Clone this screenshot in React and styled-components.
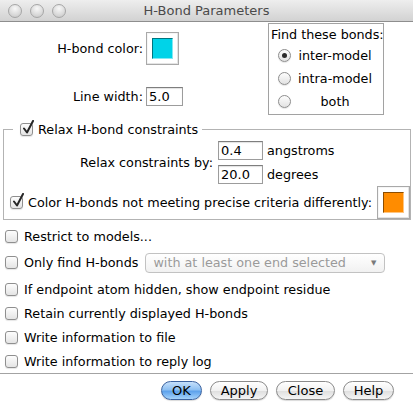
import React from 'react';
import styled, { createGlobalStyle, css } from 'styled-components';

const GlobalStyle = createGlobalStyle`
  html, body {
    margin: 0;
    padding: 0;
    background: #fff;
  }
  body {
    font-family: 'DejaVu Sans', 'Liberation Sans', sans-serif;
    font-size: 12.75px;
    color: #000;
  }
`;

const Window = styled.div`
  width: 413px;
  height: 406px;
  display: flex;
  flex-direction: column;
  background: #fff;
  overflow: hidden;
`;

const TitleBar = styled.div`
  height: 21px;
  flex-shrink: 0;
  display: grid;
  grid-template-columns: 1fr auto 1fr;
  align-items: center;
  background: linear-gradient(#eeeeee, #d2d2d2);
  border-bottom: 1px solid #8e8e8e;
`;

const Lights = styled.div`
  display: flex;
  gap: 8px;
  padding-left: 8px;
`;

const Light = styled.span`
  width: 12px;
  height: 12px;
  border-radius: 50%;
  border: 1px solid #a6a6a6;
  background: radial-gradient(circle at 50% 30%, #f8f8f8 0%, #dcdcdc 55%, #c4c4c4 100%);
`;

const Title = styled.div`
  font-size: 13px;
  color: #4a4a4a;
`;

const Body = styled.div`
  flex: 1;
  display: flex;
  flex-direction: column;
`;

const Top = styled.div`
  display: flex;
  align-items: flex-start;
`;

const LeftGrid = styled.div`
  display: grid;
  grid-template-columns: 143px auto;
  column-gap: 3px;
  row-gap: 22px;
  align-items: center;
  padding-top: 10px;
`;

const Label = styled.span`
  text-align: right;
  white-space: nowrap;
`;

const Well = styled.div`
  width: 33px;
  height: 33px;
  box-sizing: border-box;
  border: 1px solid #a9a9a9;
  background: #fff;
  box-shadow: inset -1px -1px 0 #e4e4e4, inset 1px 1px 0 #f6f6f6;
  display: flex;
  align-items: center;
  justify-content: center;
  justify-self: start;
  margin-left: ${({ $push }) => ($push ? 'auto' : '0')};
`;

const Swatch = styled.div`
  width: 21px;
  height: 21px;
  box-sizing: border-box;
  background: ${({ $color }) => $color};
  border-top: 1px solid rgba(0, 0, 0, 0.45);
  border-left: 1px solid rgba(0, 0, 0, 0.45);
  border-right: 1px solid rgba(255, 255, 255, 0.5);
  border-bottom: 1px solid rgba(255, 255, 255, 0.5);
`;

const TextInput = styled.input`
  width: ${({ $w }) => $w}px;
  height: 19px;
  box-sizing: border-box;
  border: 1px solid #9c9c9c;
  border-top-color: #7e7e7e;
  box-shadow: inset 0 1px 1px rgba(0, 0, 0, 0.12);
  padding: 0 2px;
  margin: 0;
  font: inherit;
  font-size: 13px;
  color: #000;
  justify-self: start;
  outline: none;
`;

const FindBox = styled.div`
  margin: 1px 29px 0 auto;
  width: 116px;
  height: 92px;
  box-sizing: border-box;
  border: 1px solid #a2a2a2;
  display: flex;
  flex-direction: column;
  padding: 1px 0 0 2px;
  white-space: nowrap;
`;

const FindTitle = styled.div`
  height: 19px;
  line-height: 19px;
`;

const RadioRow = styled.label`
  height: 23px;
  display: flex;
  align-items: center;
  padding-left: 7px;
  padding-right: 4px;
`;

const RadioDot = styled.span`
  width: 13px;
  height: 13px;
  box-sizing: border-box;
  border-radius: 50%;
  border: 1px solid #8d8d8d;
  background: linear-gradient(#fdfdfd, #e2e2e2);
  box-shadow: 0 1px 1px rgba(0, 0, 0, 0.1);
  display: flex;
  align-items: center;
  justify-content: center;
  flex-shrink: 0;
  &::after {
    content: '';
    width: 5px;
    height: 5px;
    border-radius: 50%;
    background: #2a2a2a;
    display: ${({ $on }) => ($on ? 'block' : 'none')};
  }
`;

const RadioText = styled.span`
  flex: 1;
  text-align: center;
`;

const Group = styled.fieldset`
  margin: 6px 2px 0 3px;
  padding: 0 0 0 6px;
  border: 1px solid #b3b3b3;
  min-inline-size: 0;
`;

const Legend = styled.legend`
  margin-left: 3px;
  padding: 0 4px 0 7px;
  display: flex;
  align-items: center;
  gap: 5px;
  height: 16px;
`;

const RelaxRow = styled.div`
  display: flex;
  align-items: center;
  margin: 4px 0 0 70px;
`;

const Stack = styled.div`
  display: flex;
  flex-direction: column;
  gap: 5px;
  margin-left: 5px;
`;

const UnitRow = styled.div`
  display: flex;
  align-items: center;
  gap: 4px;
`;

const ColorRow = styled.div`
  display: flex;
  align-items: center;
  gap: 5px;
  margin-top: 2px;
  white-space: nowrap;
`;

const CheckList = styled.div`
  display: flex;
  flex-direction: column;
  padding-left: 5px;
  padding-top: 4px;
`;

const CheckRow = styled.div`
  height: ${({ $tall }) => ($tall ? 29 : 24)}px;
  display: flex;
  align-items: center;
  gap: 6px;
  white-space: nowrap;
`;

const Box = styled.span`
  position: relative;
  width: 13px;
  height: 13px;
  box-sizing: border-box;
  border: 1px solid #8f8f8f;
  border-radius: 3px;
  background: linear-gradient(#fdfdfd, #e4e4e4);
  box-shadow: 0 1px 1px rgba(0, 0, 0, 0.1);
  flex-shrink: 0;
`;

const Tick = styled.svg`
  position: absolute;
  left: 1px;
  top: -4px;
`;

const Select = styled.div`
  margin-left: 1px;
  width: 240px;
  height: 20px;
  box-sizing: border-box;
  border: 1px solid #c2c2c2;
  border-radius: 4px;
  background: linear-gradient(#ffffff, #f1f1f1);
  display: flex;
  align-items: center;
  justify-content: space-between;
  padding: 0 8px 0 7px;
  color: #9a9a9a;
  font-size: 12.75px;
`;

const Arrow = styled.span`
  font-size: 7px;
  color: #7a7a7a;
`;

const Separator = styled.div`
  border-top: 1px solid #a3a3a3;
`;

const ButtonBar = styled.div`
  flex: 1;
  display: flex;
  justify-content: flex-end;
  align-items: center;
  gap: 8px;
  padding-right: 19px;
`;

const Button = styled.button`
  height: 19px;
  width: ${({ $w }) => $w}px;
  box-sizing: border-box;
  border-radius: 10px;
  border: 1px solid #8b8b8b;
  background: linear-gradient(#ffffff 0%, #f1f1f1 50%, #dedede 51%, #f5f5f5 100%);
  font: inherit;
  font-size: 13px;
  color: #000;
  padding: 0;
  box-shadow: 0 1px 1px rgba(0, 0, 0, 0.15);
  ${({ $primary }) =>
    $primary &&
    css`
      border-color: #3c63a0;
      background: linear-gradient(#c6e0fb 0%, #8ec0f2 45%, #5ea2ec 55%, #a4d2fb 100%);
    `}
`;

const Checkbox = ({ checked }) => (
  <Box>
    {checked && (
      <Tick width="13" height="15" viewBox="0 0 13 15">
        <path d="M2 8.5 L5 12.5 L11 1" fill="none" stroke="#262626" strokeWidth="2" strokeLinecap="round" strokeLinejoin="round" />
      </Tick>
    )}
  </Box>
);

const Radio = ({ on, children }) => (
  <RadioRow>
    <RadioDot $on={on} />
    <RadioText>{children}</RadioText>
  </RadioRow>
);

const App = () => (
  <>
    <GlobalStyle />
    <Window>
      <TitleBar>
        <Lights>
          <Light />
          <Light />
          <Light />
        </Lights>
        <Title>H-Bond Parameters</Title>
        <span />
      </TitleBar>
      <Body>
        <Top>
          <LeftGrid>
            <Label>H-bond color:</Label>
            <Well>
              <Swatch $color="#00d3e8" />
            </Well>
            <Label>Line width:</Label>
            <TextInput $w={37} defaultValue="5.0" />
          </LeftGrid>
          <FindBox>
            <FindTitle>Find these bonds:</FindTitle>
            <Radio on>inter-model</Radio>
            <Radio>intra-model</Radio>
            <Radio>both</Radio>
          </FindBox>
        </Top>
        <Group>
          <Legend>
            <Checkbox checked />
            Relax H-bond constraints
          </Legend>
          <RelaxRow>
            <Label>Relax constraints by:</Label>
            <Stack>
              <UnitRow>
                <TextInput $w={45} defaultValue="0.4" />
                angstroms
              </UnitRow>
              <UnitRow>
                <TextInput $w={45} defaultValue="20.0" />
                degrees
              </UnitRow>
            </Stack>
          </RelaxRow>
          <ColorRow>
            <Checkbox checked />
            <span>Color H-bonds not meeting precise criteria differently:</span>
            <Well $push>
              <Swatch $color="#ff8c00" />
            </Well>
          </ColorRow>
        </Group>
        <CheckList>
          <CheckRow>
            <Checkbox />
            Restrict to models...
          </CheckRow>
          <CheckRow $tall>
            <Checkbox />
            Only find H-bonds
            <Select>
              with at least one end selected
              <Arrow>▼</Arrow>
            </Select>
          </CheckRow>
          <CheckRow>
            <Checkbox />
            If endpoint atom hidden, show endpoint residue
          </CheckRow>
          <CheckRow>
            <Checkbox />
            Retain currently displayed H-bonds
          </CheckRow>
          <CheckRow>
            <Checkbox />
            Write information to file
          </CheckRow>
          <CheckRow>
            <Checkbox />
            Write information to reply log
          </CheckRow>
        </CheckList>
        <Separator />
        <ButtonBar>
          <Button $primary $w={41}>OK</Button>
          <Button $w={58}>Apply</Button>
          <Button $w={59}>Close</Button>
          <Button $w={51}>Help</Button>
        </ButtonBar>
      </Body>
    </Window>
  </>
);

export default App;
